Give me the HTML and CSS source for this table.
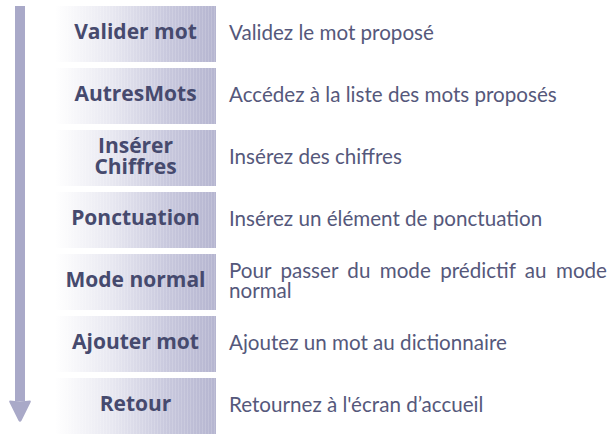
FILE: index.html
```html
<!DOCTYPE html>
<html lang="fr">
<head>
<meta charset="utf-8">
<link rel="stylesheet" href="styles.css">
</head>
<body>
<div class="page">
  <div class="arrow">
    <div class="shaft"></div>
    <svg class="head" width="24" height="24" viewBox="0 0 24 24">
      <path d="M2 1.5 Q12 3 22 1.5 Q23.5 1.5 22.5 3.5 L13.6 21.5 Q12 24 10.4 21.5 L1.5 3.5 Q0.5 1.5 2 1.5 Z" fill="#a9a9c8"/>
    </svg>
  </div>
  <div class="rows">
    <div class="row"><div class="key">Valider mot</div><div class="desc">Validez le mot proposé</div></div>
    <div class="row"><div class="key">AutresMots</div><div class="desc">Accédez à la liste des mots proposés</div></div>
    <div class="row"><div class="key">Insérer<br>Chiffres</div><div class="desc">Insérez des chiffres</div></div>
    <div class="row"><div class="key">Ponctuation</div><div class="desc">Insérez un élément de ponctuation</div></div>
    <div class="row"><div class="key">Mode normal</div><div class="desc">Pour passer du mode prédictif au mode normal</div></div>
    <div class="row"><div class="key">Ajouter mot</div><div class="desc">Ajoutez un mot au dictionnaire</div></div>
    <div class="row"><div class="key">Retour</div><div class="desc">Retournez à l'écran d’accueil</div></div>
  </div>
</div>
</body>
</html>
```
FILE: styles.css
```css
html, body {
  margin: 0;
  padding: 0;
  background: #ffffff;
}
.page {
  display: flex;
  padding: 6px 5px 0 8px;
  font-family: Lato, "Open Sans", sans-serif;
}
.arrow {
  width: 24px;
  display: flex;
  flex-direction: column;
  align-items: center;
  padding-bottom: 11px;
}
.shaft {
  flex: 1;
  width: 10px;
  background: #a9a9c8;
  margin-bottom: -2px;
}
.head {
  display: block;
  flex: none;
}
.rows {
  margin-left: 23px;
  display: flex;
  flex-direction: column;
  gap: 6px;
  flex: 1;
}
.row {
  display: flex;
  height: 56px;
}
.key {
  width: 161px;
  flex: none;
  box-sizing: border-box;
  padding-bottom: 5px;
  display: flex;
  align-items: center;
  justify-content: center;
  text-align: center;
  font-family: "Open Sans", Lato, sans-serif;
  font-weight: 700;
  font-size: 21px;
  line-height: 21px;
  color: #464a6e;
  background:
    repeating-linear-gradient(90deg, rgba(255,255,255,0.14) 0 1px, rgba(255,255,255,0) 1px 3px),
    linear-gradient(90deg, #ffffff 0%, #e8e8f1 35%, #c8c8dd 70%, #b5b5d0 100%);
}
.desc {
  flex: 1;
  display: flex;
  align-items: center;
  padding-left: 13px;
  padding-bottom: 5px;
  font-size: 20.6px;
  line-height: 20px;
  color: #55587b;
  text-align: justify;
}
```
